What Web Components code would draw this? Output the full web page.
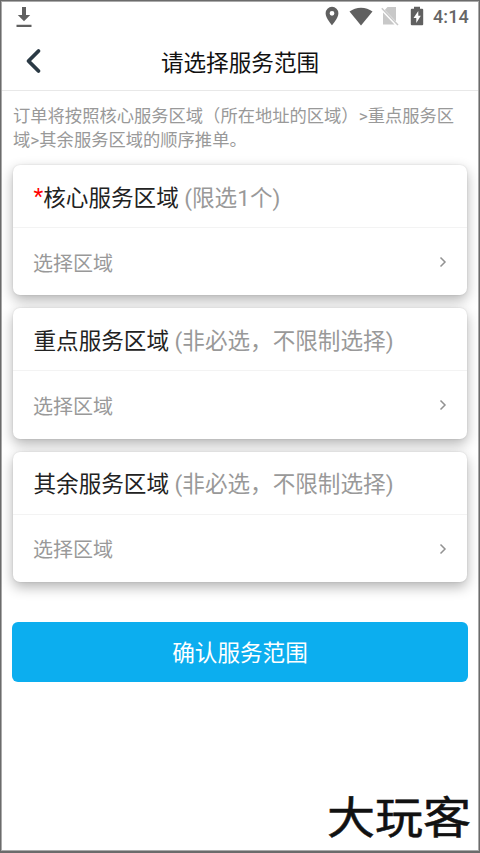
<!DOCTYPE html>
<html lang="zh-CN"><head><meta charset="utf-8"><title>请选择服务范围</title>
<style>
html,body{margin:0;height:100%;background:#fff}
body{font-family:Roboto,"Noto Sans CJK SC",sans-serif;overflow:hidden}
</style></head><body>
<service-page>
  <status-bar slot="top">4:14</status-bar>
  <nav-header slot="top">请选择服务范围</nav-header>
  <range-note>订单将按照核心服务区域（所在地址的区域）&gt;重点服务区域&gt;其余服务区域的顺序推单。</range-note>
  <area-card required><span slot="title">核心服务区域</span><span slot="hint">(限选1个)</span>选择区域</area-card>
  <area-card><span slot="title">重点服务区域</span><span slot="hint">(非必选，不限制选择)</span>选择区域</area-card>
  <area-card><span slot="title">其余服务区域</span><span slot="hint">(非必选，不限制选择)</span>选择区域</area-card>
  <confirm-button>确认服务范围</confirm-button>
  <water-mark slot="mark">大玩客</water-mark>
</service-page>
<script>
const define = (name, html) => customElements.define(name, class extends HTMLElement {
  constructor() { super(); this.attachShadow({mode: 'open'}).innerHTML = html; }
});
define('service-page', `<style>
:host{display:flex;flex-direction:column;box-sizing:border-box;width:480px;height:853px;position:relative;
 border:solid #6b6b6b;border-width:1px 1px 2px 1px;background:#fff;box-shadow:inset 0 0 0 1px #aaa}
main{display:flex;flex-direction:column;padding:0 11px 0 11px;gap:13px}
</style><slot name="top"></slot><main><slot></slot></main><slot name="mark"></slot>`);
define('status-bar', `<style>
:host{display:flex;height:30px;align-items:center;padding-right:10px;font-size:18px;line-height:30px;color:#666;font-weight:500}
svg{display:block;fill:#606060;flex:none}
.time{margin-left:8px;padding-top:2px;letter-spacing:.15px}
</style>
<svg width="16" height="22" viewBox="0 0 16 22" style="margin:1px auto 0 15px"><path d="M6 1h4v8h4.2L8 15.2 1.8 9H6zM.5 18.8h15V21H.5z"/></svg>
<svg width="14" height="20" viewBox="0 0 14 20"><path fill-rule="evenodd" d="M7 .8a6.4 6.4 0 0 0-6.4 6.4C.6 12 7 19.2 7 19.2S13.4 12 13.4 7.200A6.400 6.400 0 0 0 7 .8zm0 4.100a2.400 2.400 0 1 1 0 4.800 2.400 2.400 0 0 1 0-4.800z"/></svg>
<svg width="24" height="19" viewBox="0 0 24 19" style="margin-left:10px"><path d="M.5 4.500Q5.500.7 12 .7t11.500 3.800L12 18.500z"/></svg>
<svg width="18" height="20" viewBox="0 0 18 20" style="margin-left:8px"><path fill="#c8c8c8" d="M6.500 1H15v14.500L3.800 4zM2 6.500 13.500 18.500H2z"/><path d="M.8 2.200 17 19" stroke="#c8c8c8" stroke-width="1.500"/></svg>
<svg width="14" height="20" viewBox="0 0 14 20" style="margin-left:11px;margin-right:1px"><path fill-rule="evenodd" d="M4 .8h6v2h2.200q1 0 1 1v14.500q0 1-1 1H1.800q-1 0-1-1V3.800q0-1 1-1H4zM8.300 5 3.500 12h2.800v5l4.500-7.200H8.300z"/></svg>
<span class="time"><slot></slot></span>`);
define('nav-header', `<style>
:host{display:grid;grid-template-columns:60px 1fr 60px;height:59px;align-items:center;border-bottom:1px solid #e8e8e8;font-size:22.600px;color:#111;text-align:center;margin:0 1px}
svg{display:block;margin-left:23px}
span{padding-top:1px}
</style><svg width="18" height="26" viewBox="0 0 18 26" fill="none" stroke="#2b3a45" stroke-width="3.800" stroke-linecap="round" stroke-linejoin="round"><path d="M13.500 3 3.500 13l10 10"/></svg><span><slot></slot></span>`);
define('range-note', `<style>
:host{display:block;font-size:17.300px;line-height:24px;color:#999;padding:13px 8px 0 1px;word-break:break-all}
</style><slot></slot>`);
define('area-card', `<style>
:host{display:flex;flex-direction:column;box-sizing:border-box;height:130.300px;margin:0 1px;background:#fff;border-radius:7px;box-shadow:0 5px 13px rgba(0,0,0,.3),0 0 2px rgba(0,0,0,.12)}
header{box-sizing:border-box;height:63px;padding:0 20.500px;border-bottom:1px solid #f3f3f3;display:flex;align-items:center;font-size:22.600px;color:#222;white-space:pre}
.star{display:none;color:#f00}
:host([required]) .star{display:inline}
.hint{color:#999;margin-left:5.500px}
.row{flex:1;padding:1px 20px 0 20px;display:flex;align-items:center;justify-content:space-between;font-size:20px;color:#999}
</style><header><span class="star">*</span><slot name="title"></slot><span class="hint"><slot name="hint"></slot></span></header>
<div class="row"><span><slot></slot></span><svg width="8" height="12" viewBox="0 0 8 12" fill="none" stroke="#929292" stroke-width="1.500"><path d="m1.500 1.500 4.500 4.500-4.500 4.500"/></svg></div>`);
define('confirm-button', `<style>
:host{display:flex;align-items:center;justify-content:center;height:60px;margin-top:27px;background:#0caeef;border-radius:6px;color:#fff;font-size:22.600px}
</style><slot></slot>`);
define('water-mark', `<style>
:host{position:absolute;right:8px;bottom:8px;font-size:48px;line-height:48px;color:#111;white-space:nowrap;-webkit-text-stroke:.6px #111}
span{display:block;transform:scaleY(.92)}
</style><span><slot></slot></span>`);
</script></body></html>
